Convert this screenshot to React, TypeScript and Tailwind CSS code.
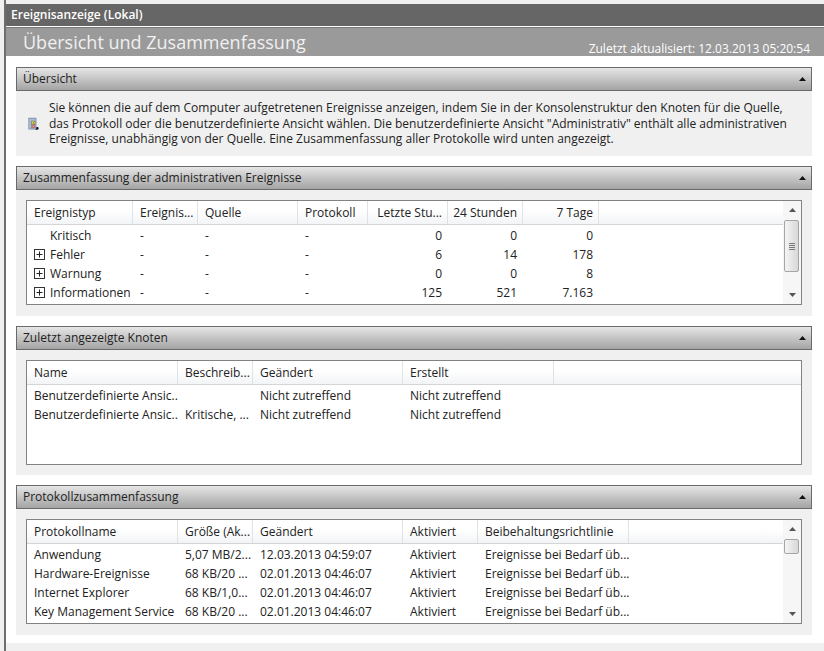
const font = { fontFamily: '"Open Sans", "Noto Sans", sans-serif' };

type Col = { label: string; width: number; right?: boolean };

function Caret({ down = false, color = "#111" }: { down?: boolean; color?: string }) {
  return (
    <svg width="7" height="4" viewBox="0 0 7 4" className={down ? "rotate-180" : ""}>
      <path d="M0 4 L3.5 0 L7 4 Z" fill={color} />
    </svg>
  );
}

function PlusBox() {
  return (
    <svg width="11" height="11" viewBox="0 0 11 11" className="shrink-0">
      <rect x="0.5" y="0.5" width="10" height="10" fill="#fff" stroke="#333" />
      <path d="M2.5 5.5 H8.5 M5.5 2.5 V8.5" stroke="#222" />
    </svg>
  );
}

function BookIcon() {
  return (
    <svg width="30" height="36" viewBox="0 0 30 36">
      <path d="M23 26 H27 L29 28 V32 L26 34 H20 Z" fill="#111" />
      <rect x="1.5" y="1.5" width="21" height="31" rx="1" fill="#8fa3c4" stroke="#5d6c8a" />
      <rect x="5" y="3" width="16" height="28" fill="#a9bad6" stroke="#7488aa" strokeWidth="0.6" />
      <path d="M2 5 H5 M2 9 H5 M2 13 H5 M2 17 H5 M2 21 H5 M2 25 H5 M2 29 H5" stroke="#e8ecf3" strokeWidth="1.4" />
      <rect x="9" y="9" width="11" height="21" rx="2" fill="#77806a" />
      <circle cx="14.5" cy="14" r="4.2" fill="#e0cf3c" />
      <rect x="13.8" y="11.5" width="1.4" height="3.4" fill="#5b4d10" />
      <rect x="13.8" y="15.4" width="1.4" height="1.2" fill="#5b4d10" />
      <circle cx="14.5" cy="24" r="4.6" fill="#c8434f" stroke="#e9c3c6" strokeWidth="0.8" />
      <path d="M12.7 22.2 L16.3 25.8 M16.3 22.2 L12.7 25.8" stroke="#fff" strokeWidth="1.3" />
    </svg>
  );
}

function SectionHeader({ title }: { title: string }) {
  return (
    <div className="flex h-[24px] items-center justify-between border border-[#6a6a6a] bg-gradient-to-b from-[#e6e6e6] to-[#a4a4a4] pl-[6px] pr-[5px] text-[#222]">
      <span className="text-[12px]">{title}</span>
      <Caret />
    </div>
  );
}

function Scrollbar({ thumbTop, thumbHeight, grip = false }: { thumbTop: number; thumbHeight: number; grip?: boolean }) {
  return (
    <div className="relative flex w-[18px] shrink-0 flex-col items-center justify-between bg-[#f6f6f6] py-[7px]">
      <Caret color="#555" />
      <Caret down color="#555" />
      <div
        className="absolute left-[1px] flex w-[15px] items-center justify-center rounded-[2px] border border-[#a5a5a5] bg-gradient-to-r from-[#f4f4f4] to-[#d8d8d8]"
        style={{ top: thumbTop, height: thumbHeight }}
      >
        {grip && (
          <div className="flex w-[6px] flex-col gap-[1px]">
            <div className="h-px bg-[#777]" />
            <div className="h-px bg-[#777]" />
            <div className="h-px bg-[#777]" />
            <div className="h-px bg-[#777]" />
          </div>
        )}
      </div>
    </div>
  );
}

function ListTable({
  cols,
  rows,
  height,
  scroll,
  tree = false,
}: {
  cols: Col[];
  rows: string[][];
  height: number;
  scroll?: { top: number; height: number; grip?: boolean };
  tree?: boolean;
}) {
  return (
    <div className="flex border border-[#828282] bg-white text-[12px] text-[#222]" style={{ height }}>
      <div className="min-w-0 flex-1">
        <div className="flex h-[24px] border-b border-[#d5d5d5] bg-gradient-to-b from-white from-40% to-[#f2f4f6]">
          {cols.map((c) => (
            <div
              key={c.label}
              className={`flex shrink-0 items-center border-r border-[#dfe2e6] ${c.right ? "justify-end pr-[5px]" : "pl-[7px]"}`}
              style={{ width: c.width }}
            >
              <span className="whitespace-nowrap">{c.label}</span>
            </div>
          ))}
        </div>
        <div className="pt-px">
          {rows.map((r, i) => (
            <div key={i} className="flex h-[19px] items-center">
              {r.map((v, j) => (
                <div
                  key={j}
                  className={`flex shrink-0 items-center overflow-hidden whitespace-nowrap ${cols[j].right ? "justify-end pr-[6px]" : "pl-[7px]"}`}
                  style={{ width: cols[j].width }}
                >
                  {tree && j === 0 ? (
                    <>
                      <span className="w-[16px] shrink-0">{i > 0 && <PlusBox />}</span>
                      {v}
                    </>
                  ) : (
                    v
                  )}
                </div>
              ))}
            </div>
          ))}
        </div>
      </div>
      {scroll && <Scrollbar thumbTop={0} thumbHeight={0} />}
    </div>
  );
}

const adminCols: Col[] = [
  { label: "Ereignistyp", width: 106 },
  { label: "Ereignis...", width: 65 },
  { label: "Quelle", width: 100 },
  { label: "Protokoll", width: 70 },
  { label: "Letzte Stu...", width: 80, right: true },
  { label: "24 Stunden", width: 75, right: true },
  { label: "7 Tage", width: 76, right: true },
];

const adminRows = [
  ["Kritisch", "-", "-", "-", "0", "0", "0"],
  ["Fehler", "-", "-", "-", "6", "14", "178"],
  ["Warnung", "-", "-", "-", "0", "0", "8"],
  ["Informationen", "-", "-", "-", "125", "521", "7.163"],
];

const nodeCols: Col[] = [
  { label: "Name", width: 151 },
  { label: "Beschreib...", width: 75 },
  { label: "Geändert", width: 150 },
  { label: "Erstellt", width: 151 },
];

const nodeRows = [
  ["Benutzerdefinierte Ansic...", "", "Nicht zutreffend", "Nicht zutreffend"],
  ["Benutzerdefinierte Ansic...", "Kritische, ...", "Nicht zutreffend", "Nicht zutreffend"],
];

const logCols: Col[] = [
  { label: "Protokollname", width: 151 },
  { label: "Größe (Ak...", width: 75 },
  { label: "Geändert", width: 150 },
  { label: "Aktiviert", width: 75 },
  { label: "Beibehaltungsrichtlinie", width: 151 },
];

const logRows = [
  ["Anwendung", "5,07 MB/2...", "12.03.2013 04:59:07", "Aktiviert", "Ereignisse bei Bedarf üb..."],
  ["Hardware-Ereignisse", "68 KB/20 ...", "02.01.2013 04:46:07", "Aktiviert", "Ereignisse bei Bedarf üb..."],
  ["Internet Explorer", "68 KB/1,0...", "02.01.2013 04:46:07", "Aktiviert", "Ereignisse bei Bedarf üb..."],
  ["Key Management Service", "68 KB/20 ...", "02.01.2013 04:46:07", "Aktiviert", "Ereignisse bei Bedarf üb..."],
];

function TableWithBar(props: {
  cols: Col[];
  rows: string[][];
  height: number;
  thumbTop: number;
  thumbHeight: number;
  grip?: boolean;
  tree?: boolean;
}) {
  return (
    <div className="flex border border-[#828282] bg-white text-[12px] text-[#222]" style={{ height: props.height }}>
      <div className="min-w-0 flex-1">
        <ListBody cols={props.cols} rows={props.rows} tree={props.tree} />
      </div>
      <Scrollbar thumbTop={props.thumbTop} thumbHeight={props.thumbHeight} grip={props.grip} />
    </div>
  );
}

function ListBody({ cols, rows, tree }: { cols: Col[]; rows: string[][]; tree?: boolean }) {
  return (
    <>
      <div className="flex h-[24px] border-b border-[#d5d5d5] bg-gradient-to-b from-white from-40% to-[#f2f4f6]">
        {cols.map((c) => (
          <div
            key={c.label}
            className={`flex shrink-0 items-center border-r border-[#dfe2e6] ${c.right ? "justify-end pr-[5px]" : "pl-[7px]"}`}
            style={{ width: c.width }}
          >
            <span className="whitespace-nowrap">{c.label}</span>
          </div>
        ))}
      </div>
      <div className="pt-px">
        {rows.map((r, i) => (
          <div key={i} className="flex h-[19px] items-center">
            {r.map((v, j) => (
              <div
                key={j}
                className={`flex shrink-0 items-center overflow-hidden whitespace-nowrap ${cols[j].right ? "justify-end pr-[6px]" : "pl-[7px]"}`}
                style={{ width: cols[j].width }}
              >
                {tree && j === 0 ? (
                  <>
                    <span className="w-[16px] shrink-0">{i > 0 && <PlusBox />}</span>
                    {v}
                  </>
                ) : (
                  v
                )}
              </div>
            ))}
          </div>
        ))}
      </div>
    </>
  );
}

export default function App() {
  return (
    <div className="flex h-[651px] w-[824px] overflow-hidden bg-white" style={font}>
      <div className="w-[4px] shrink-0 bg-[#f0f0f0]" />
      <div className="flex min-w-0 flex-1 flex-col border-l-2 border-[#6e6e6e]">
        <div className="h-[4px] shrink-0 bg-[#f0f0f0]" />
        <div className="flex h-[23px] shrink-0 items-center border-b border-white bg-[#666] pl-[5px] text-[12px] font-semibold text-white">
          Ereignisanzeige (Lokal)
        </div>
        <div className="flex h-[29px] shrink-0 items-center justify-between border-t border-[#777] bg-[#9a9a9a] pl-[17px] pr-[14px] text-white">
          <span className="text-[18px] text-[#f0f0f0]">Übersicht und Zusammenfassung</span>
          <span className="mt-[13px] text-[12px]">Zuletzt aktualisiert: 12.03.2013 05:20:54</span>
        </div>
        <div className="flex flex-1 flex-col gap-[10px] pl-[10px] pr-[12px] pt-[11px]">
          <section>
            <SectionHeader title="Übersicht" />
            <div className="flex h-[65px] items-center gap-[10px] bg-[#f0f0f0] pl-[12px] pr-[20px] text-[12px] leading-[15.5px] text-[#222]">
              <BookIcon />
              <p>
                Sie können die auf dem Computer aufgetretenen Ereignisse anzeigen, indem Sie in der Konsolenstruktur den Knoten für die Quelle, das
                Protokoll oder die benutzerdefinierte Ansicht wählen. Die benutzerdefinierte Ansicht "Administrativ" enthält alle administrativen
                Ereignisse, unabhängig von der Quelle. Eine Zusammenfassung aller Protokolle wird unten angezeigt.
              </p>
            </div>
          </section>
          <section>
            <SectionHeader title="Zusammenfassung der administrativen Ereignisse" />
            <div className="bg-[#f0f0f0] px-[10px] pb-[11px] pt-[10px]">
              <TableWithBar cols={adminCols} rows={adminRows} height={105} thumbTop={19} thumbHeight={52} grip tree />
            </div>
          </section>
          <section>
            <SectionHeader title="Zuletzt angezeigte Knoten" />
            <div className="bg-[#f0f0f0] px-[10px] pb-[10px] pt-[10px]">
              <ListTable cols={nodeCols} rows={nodeRows} height={105} />
            </div>
          </section>
          <section>
            <SectionHeader title="Protokollzusammenfassung" />
            <div className="bg-[#f0f0f0] px-[10px] pb-[11px] pt-[10px]">
              <TableWithBar cols={logCols} rows={logRows} height={105} thumbTop={19} thumbHeight={15} />
            </div>
          </section>
        </div>
        <div className="h-[8px] shrink-0 bg-[#f0f0f0]" />
      </div>
    </div>
  );
}
